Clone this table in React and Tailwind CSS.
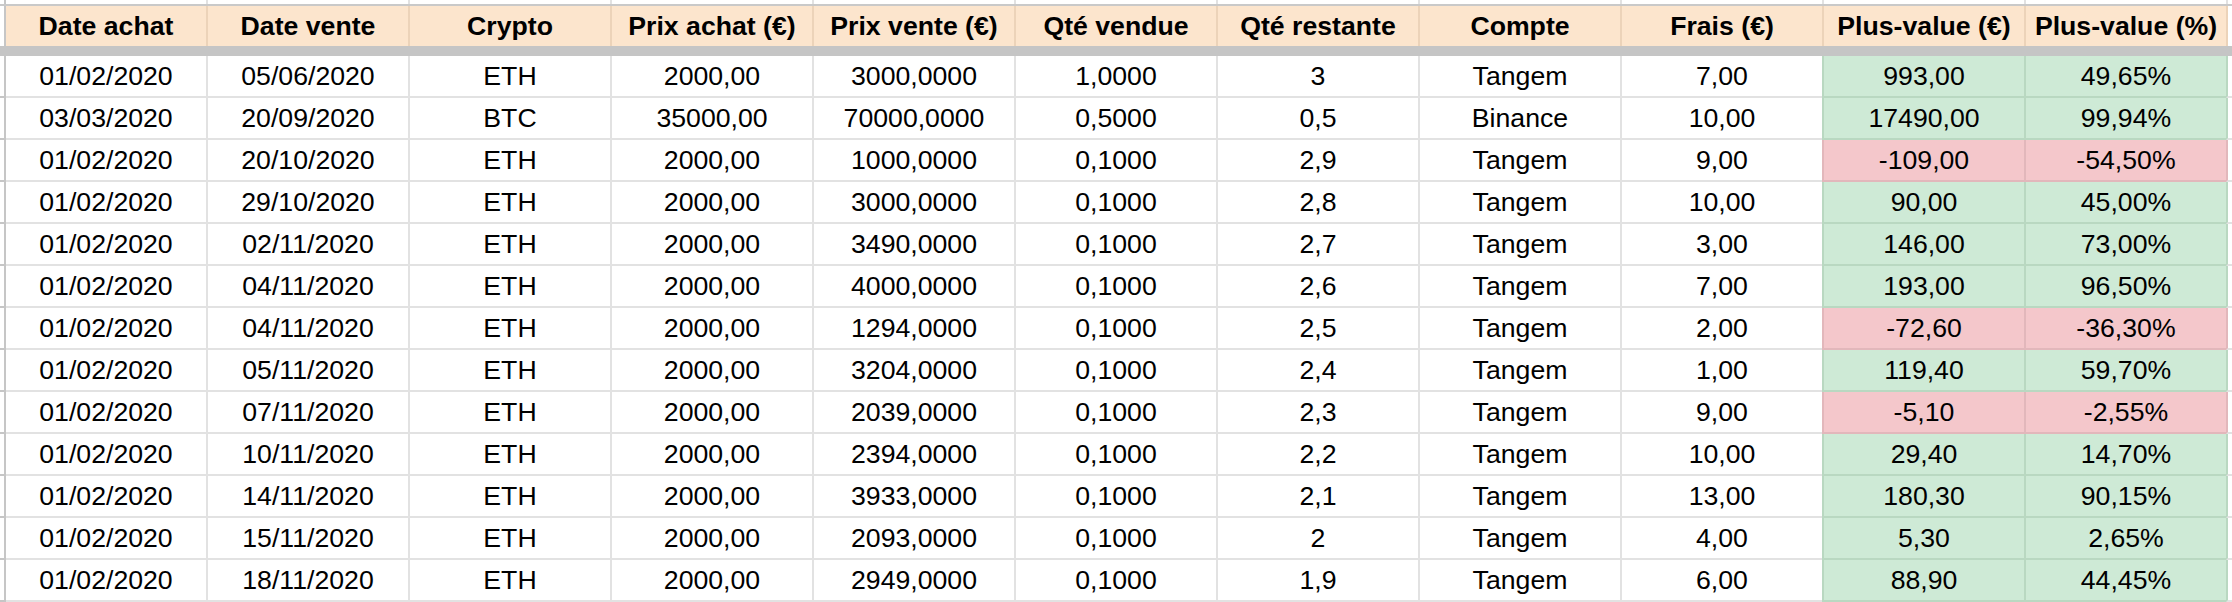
const headers = [
  'Date achat',
  'Date vente',
  'Crypto',
  'Prix achat (€)',
  'Prix vente (€)',
  'Qté vendue',
  'Qté restante',
  'Compte',
  'Frais (€)',
  'Plus-value (€)',
  'Plus-value (%)',
];

const rows = [
  ['01/02/2020', '05/06/2020', 'ETH', '2000,00', '3000,0000', '1,0000', '3', 'Tangem', '7,00', '993,00', '49,65%'],
  ['03/03/2020', '20/09/2020', 'BTC', '35000,00', '70000,0000', '0,5000', '0,5', 'Binance', '10,00', '17490,00', '99,94%'],
  ['01/02/2020', '20/10/2020', 'ETH', '2000,00', '1000,0000', '0,1000', '2,9', 'Tangem', '9,00', '-109,00', '-54,50%'],
  ['01/02/2020', '29/10/2020', 'ETH', '2000,00', '3000,0000', '0,1000', '2,8', 'Tangem', '10,00', '90,00', '45,00%'],
  ['01/02/2020', '02/11/2020', 'ETH', '2000,00', '3490,0000', '0,1000', '2,7', 'Tangem', '3,00', '146,00', '73,00%'],
  ['01/02/2020', '04/11/2020', 'ETH', '2000,00', '4000,0000', '0,1000', '2,6', 'Tangem', '7,00', '193,00', '96,50%'],
  ['01/02/2020', '04/11/2020', 'ETH', '2000,00', '1294,0000', '0,1000', '2,5', 'Tangem', '2,00', '-72,60', '-36,30%'],
  ['01/02/2020', '05/11/2020', 'ETH', '2000,00', '3204,0000', '0,1000', '2,4', 'Tangem', '1,00', '119,40', '59,70%'],
  ['01/02/2020', '07/11/2020', 'ETH', '2000,00', '2039,0000', '0,1000', '2,3', 'Tangem', '9,00', '-5,10', '-2,55%'],
  ['01/02/2020', '10/11/2020', 'ETH', '2000,00', '2394,0000', '0,1000', '2,2', 'Tangem', '10,00', '29,40', '14,70%'],
  ['01/02/2020', '14/11/2020', 'ETH', '2000,00', '3933,0000', '0,1000', '2,1', 'Tangem', '13,00', '180,30', '90,15%'],
  ['01/02/2020', '15/11/2020', 'ETH', '2000,00', '2093,0000', '0,1000', '2', 'Tangem', '4,00', '5,30', '2,65%'],
  ['01/02/2020', '18/11/2020', 'ETH', '2000,00', '2949,0000', '0,1000', '1,9', 'Tangem', '6,00', '88,90', '44,45%'],
];

const tones = {
  plain: 'bg-white border-[#e2e2e2]',
  gain: 'bg-[#ceead6] border-[#b9d8c1]',
  loss: 'bg-[#f4c7cb] border-[#e2b7bb]',
};

function toneFor(row, col) {
  if (col < 9) return 'plain';
  return row[9].startsWith('-') ? 'loss' : 'gain';
}

function TopStrip() {
  return (
    <div className="flex h-[4px]">
      <div className="w-[6px] shrink-0 border-r-2 border-[#c6c6c6] bg-white" />
      {headers.map((h, i) => (
        <div
          key={h}
          className={`shrink-0 bg-white border-[#e2e2e2] ${i === 0 ? 'w-[200px]' : 'w-[202px] border-l-2'}`}
        />
      ))}
      <div className="flex-1 border-l-2 border-[#e2e2e2] bg-white" />
    </div>
  );
}

function HeaderRow() {
  return (
    <div className="flex h-[42px] border-t-2 border-[#c9c9c9]">
      <div className="w-[6px] shrink-0 border-r-2 border-[#c6c6c6] bg-white" />
      {headers.map((h, i) => (
        <div
          key={h}
          className={`shrink-0 flex items-center justify-center bg-[#fce5cd] border-[#ecd3b9] font-bold whitespace-nowrap ${i === 0 ? 'w-[200px]' : 'w-[202px] border-l-2'}`}
        >
          {h}
        </div>
      ))}
      <div className="flex-1 border-l-2 border-[#ecd3b9] bg-white" />
    </div>
  );
}

function DataRow({ row }) {
  const last = toneFor(row, 10);
  return (
    <div className="flex h-[42px]">
      <div className="w-[6px] shrink-0 border-r-2 border-b-2 border-[#c6c6c6] bg-white" />
      {row.map((v, i) => (
        <div
          key={i}
          className={`shrink-0 flex items-center justify-center border-b-2 whitespace-nowrap ${tones[toneFor(row, i)]} ${i === 0 ? 'w-[200px]' : 'w-[202px] border-l-2'}`}
        >
          {v}
        </div>
      ))}
      <div className={`flex-1 border-l-2 border-b-2 bg-white ${last === 'loss' ? 'border-l-[#e2b7bb]' : 'border-l-[#b9d8c1]'} border-b-[#e2e2e2]`} />
    </div>
  );
}

export default function App() {
  return (
    <div className="w-[2232px] h-[602px] overflow-hidden bg-white text-black text-[26.67px] font-['Liberation_Sans',Arial,sans-serif]">
      <TopStrip />
      <HeaderRow />
      <div className="h-[10px] bg-[#c5c5c5]" />
      {rows.map((r, i) => (
        <DataRow key={i} row={r} />
      ))}
    </div>
  );
}
